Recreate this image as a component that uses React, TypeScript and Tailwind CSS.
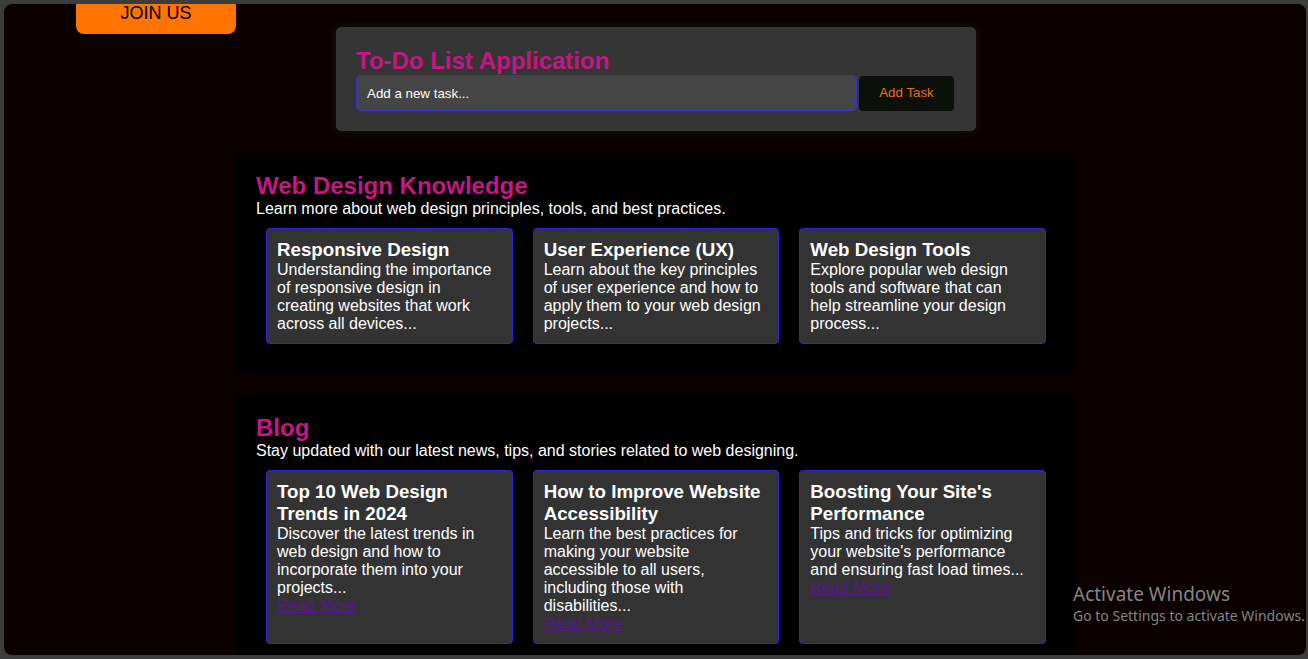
import React from "react";

const knowledge = [
  {
    title: "Responsive Design",
    body: "Understanding the importance of responsive design in creating websites that work across all devices...",
  },
  {
    title: "User Experience (UX)",
    body: "Learn about the key principles of user experience and how to apply them to your web design projects...",
  },
  {
    title: "Web Design Tools",
    body: "Explore popular web design tools and software that can help streamline your design process...",
  },
];

const blog = [
  {
    title: "Top 10 Web Design Trends in 2024",
    body: "Discover the latest trends in web design and how to incorporate them into your projects...",
  },
  {
    title: "How to Improve Website Accessibility",
    body: "Learn the best practices for making your website accessible to all users, including those with disabilities...",
  },
  {
    title: "Boosting Your Site's Performance",
    body: "Tips and tricks for optimizing your website's performance and ensuring fast load times...",
  },
];

function Card({ title, body, link }: { title: string; body: string; link?: boolean }) {
  return (
    <div className="flex-1 m-[10px] p-[10px] bg-[#333333] border border-[#3322dd] rounded-[4px] text-white leading-[normal] text-[16px]">
      <h3 className="text-[18.72px] font-bold leading-[normal] m-0">{title}</h3>
      <p className="text-[16px] leading-[normal] m-0">{body}</p>
      {link && (
        <a href="#" className="text-[16px] leading-[normal] text-[#551a8b] underline">
          Read More
        </a>
      )}
    </div>
  );
}

function Section({
  title,
  sub,
  items,
  link,
}: {
  title: string;
  sub: string;
  items: { title: string; body: string }[];
  link?: boolean;
}) {
  return (
    <section className="w-[840px] mx-auto bg-black p-[20px] mb-[20px]">
      <h2 className="text-[24px] font-bold leading-[normal] text-[#c71585] m-0">{title}</h2>
      <p className="text-[16px] leading-[normal] text-white m-0">{sub}</p>
      <div className="flex items-stretch">
        {items.map((it) => (
          <Card key={it.title} title={it.title} body={it.body} link={link} />
        ))}
      </div>
    </section>
  );
}

export default function App() {
  return (
    <div
      className="w-full h-[659px] bg-[#3c3c3c] pt-[4px] pl-[4px] pr-[2px] pb-[4px] overflow-hidden"
      style={{ fontFamily: '"Liberation Sans", Arial, sans-serif' }}
    >
      <div className="relative h-full rounded-[8px] bg-[#0a0000] overflow-hidden">
        <div className="absolute left-[72px] top-0 w-[160px] h-[30px] bg-[#ff7300] rounded-b-[8px] flex justify-center">
          <span className="text-[18px] leading-[normal] text-black -mt-[1px]">JOIN US</span>
        </div>

        <div className="pl-[2px]">
          <div className="pt-[23px]">
            <div className="w-[640px] mx-auto bg-[#353535] rounded-[5px] p-[20px] shadow-[0_0_10px_rgba(70,70,70,0.35)]">
              <h2 className="text-[24px] font-bold leading-[normal] text-[#c71585] m-0">
                To-Do List Application
              </h2>
              <div className="flex items-center">
                <input
                  className="flex-1 h-[36px] px-[10px] bg-[#454545] border border-[#3b2fd5] rounded-[4px] text-[13.33px] text-white placeholder:text-white outline-none"
                  placeholder="Add a new task..."
                />
                <button className="ml-[2px] mr-[2px] w-[95px] h-[35px] bg-[#0b100b] rounded-[4px] text-[13.33px] text-[#e8730c]">
                  Add Task
                </button>
              </div>
            </div>
          </div>

          <div className="mt-[21px]">
            <Section
              title="Web Design Knowledge"
              sub="Learn more about web design principles, tools, and best practices."
              items={knowledge}
            />
            <Section
              title="Blog"
              sub="Stay updated with our latest news, tips, and stories related to web designing."
              items={blog}
              link
            />
          </div>
        </div>

        <div
          className="absolute left-[1069px] top-[578px] text-[#858585] whitespace-nowrap"
          style={{ fontFamily: '"Noto Sans", "Open Sans", sans-serif' }}
        >
          <div className="text-[19px] leading-[24px]">Activate Windows</div>
          <div className="text-[14px] leading-[20px]">Go to Settings to activate Windows.</div>
        </div>
      </div>
    </div>
  );
}
